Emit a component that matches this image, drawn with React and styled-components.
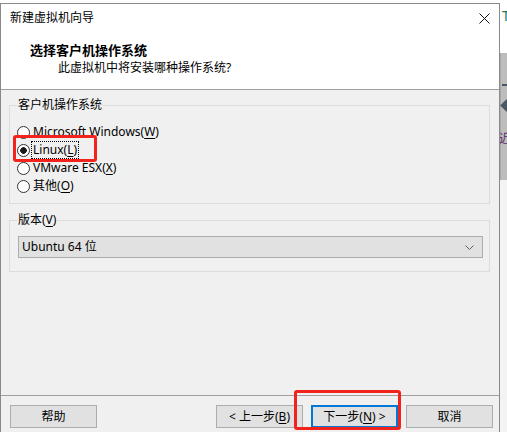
import React from 'react'
import styled, { createGlobalStyle } from 'styled-components'

const GlobalStyle = createGlobalStyle`
  html, body {
    margin: 0;
    padding: 0;
    background: #fff;
  }
  body {
    width: 507px;
    height: 432px;
    overflow: hidden;
    font-family: "Noto Sans", "Noto Sans CJK SC", sans-serif;
    font-size: 12px;
    color: #000;
  }
`

const Screen = styled.div`
  display: flex;
  width: 507px;
  height: 432px;
  overflow: hidden;
`

const Window = styled.div`
  flex: none;
  margin-top: 3px;
  width: 500px;
  height: 440px;
  box-sizing: border-box;
  border: 1px solid #8a8a8a;
  border-bottom: none;
  background: #f0f0f0;
  display: flex;
  flex-direction: column;
`

const TitleBar = styled.div`
  height: 28px;
  background: #fff;
  display: flex;
  align-items: center;
  justify-content: space-between;
  padding: 0 9px;
  line-height: 16px;
`

const Header = styled.div`
  height: 47px;
  background: #fff;
  padding: 10px 0 0 29px;
  border-bottom: 1px solid #a0a0a0;
`

const HeaderTitle = styled.div`
  font-size: 13px;
  font-weight: bold;
  line-height: 16px;
`

const HeaderSub = styled.div`
  margin: 2px 0 0 28px;
  line-height: 16px;
`

const Body = styled.div`
  height: 305px;
  box-sizing: border-box;
  padding: 7px 9px 0 8px;
  display: flex;
  flex-direction: column;
  gap: 8px;
`

const Group = styled.fieldset`
  margin: 0;
  min-width: 0;
  border: 1px solid #dcdcdc;
  padding: ${({ $pad }) => $pad};
`

const Legend = styled.legend`
  padding: 0 1px;
  margin-left: ${({ $shift }) => $shift || 0}px;
  line-height: 16px;
`

const RadioRow = styled.div`
  position: relative;
  display: flex;
  align-items: center;
  gap: 3px;
  height: 18px;
`

const RadioDot = styled.span`
  flex: none;
  width: 13px;
  height: 13px;
  box-sizing: border-box;
  border: 1px solid #333;
  border-radius: 50%;
  background: ${({ $on }) => ($on ? 'radial-gradient(circle, #1a1a1a 0 3px, #fff 3.6px)' : '#fff')};
`

const RadioLabel = styled.span`
  line-height: 16px;
  padding: 0 1px;
  margin-left: -1px;
  outline: ${({ $focus }) => ($focus ? '1px dotted #000' : 'none')};
  outline-offset: 0;
`

const Key = styled.span`
  text-decoration: underline;
  text-underline-offset: 2px;
`

const Mark = styled.span`
  position: absolute;
  box-sizing: border-box;
  border: 3px solid #f2231d;
  border-radius: 3px;
  pointer-events: none;
`

const LinuxMark = styled(Mark)`
  left: -4px;
  top: -6px;
  width: 84px;
  height: 27px;
`

const Select = styled.div`
  height: 22px;
  box-sizing: border-box;
  border: 1px solid #adadad;
  background: #e1e1e1;
  display: flex;
  align-items: center;
  justify-content: space-between;
  padding: 0 8px 0 3px;
  line-height: 16px;
`

const Footer = styled.div`
  border-top: 1px solid #a0a0a0;
  padding: 9px 6px 0 9px;
  display: flex;
  gap: 8px;
`

const Spacer = styled.div`
  flex: 1;
`

const Button = styled.div`
  position: relative;
  width: 87px;
  height: 23px;
  box-sizing: border-box;
  border: ${({ $primary }) => ($primary ? '2px solid #0078d7' : '1px solid #adadad')};
  background: #e1e1e1;
  display: flex;
  align-items: center;
  justify-content: center;
  line-height: 16px;
`

const NextMark = styled(Mark)`
  left: -19px;
  top: -17px;
  right: -5px;
  bottom: -4px;
`

const Strip = styled.div`
  flex: none;
  width: 7px;
  display: flex;
  flex-direction: column;
  overflow: hidden;
`

const StripTop = styled.div`
  height: 53px;
  background: #fff;
  color: #1f7a55;
  font-size: 14px;
  line-height: 14px;
  padding: 9px 0 0 2px;
  box-sizing: border-box;
`

const StripMid = styled.div`
  height: 127px;
  background: #bdbdbd;
  border-left: 1px solid #a8a8a8;
  display: flex;
  flex-direction: column;
  padding-top: 31px;
  box-sizing: border-box;
`

const StripDash = styled.div`
  width: 6px;
  height: 2px;
  background: #4a5866;
  margin-left: 1px;
`

const StripDiamond = styled.div`
  width: 9px;
  height: 9px;
  background: #4a5866;
  transform: rotate(45deg);
  margin: 15px 0 0 1px;
`

const StripChar = styled.div`
  margin: 22px 0 0 -2px;
  font-size: 12px;
  line-height: 14px;
  color: #5a2a6a;
  white-space: nowrap;
`

const StripBottom = styled.div`
  flex: 1;
  background: #f3f3f3;
`

const CloseIcon = () => (
  <svg width="11" height="11" viewBox="0 0 11 11" style={{ marginRight: 0 }}>
    <path d="M0.5 0.5 L10.5 10.5 M10.5 0.5 L0.5 10.5" stroke="#111" strokeWidth="1" fill="none" />
  </svg>
)

const Chevron = () => (
  <svg width="9" height="5" viewBox="0 0 9 5">
    <path d="M0.5 0.5 L4.5 4.5 L8.5 0.5" stroke="#606060" strokeWidth="1" fill="none" />
  </svg>
)

const osOptions = [
  { label: 'Microsoft Windows', key: 'W' },
  { label: 'Linux', key: 'L', checked: true },
  { label: 'VMware ESX', key: 'X' },
  { label: '其他', key: 'O' },
]

export default function App() {
  return (
    <>
      <GlobalStyle />
      <Screen>
        <Window>
          <TitleBar>
            <span>新建虚拟机向导</span>
            <CloseIcon />
          </TitleBar>
          <Header>
            <HeaderTitle>选择客户机操作系统</HeaderTitle>
            <HeaderSub>此虚拟机中将安装哪种操作系统?</HeaderSub>
          </Header>
          <Body>
            <Group $pad="10px 6px 8px 7px">
              <Legend>客户机操作系统</Legend>
              {osOptions.map((opt) => (
                <RadioRow key={opt.key}>
                  <RadioDot $on={opt.checked} />
                  <RadioLabel $focus={opt.checked}>
                    {opt.label}(<Key>{opt.key}</Key>)
                  </RadioLabel>
                  {opt.checked && <LinuxMark />}
                </RadioRow>
              ))}
            </Group>
            <Group $pad="8px 6px 13px 8px">
              <Legend $shift={-1}>
                版本(<Key>V</Key>)
              </Legend>
              <Select>
                <span>Ubuntu 64 位</span>
                <Chevron />
              </Select>
            </Group>
          </Body>
          <Footer>
            <Button>帮助</Button>
            <Spacer />
            <Button>&lt; 上一步(<Key>B</Key>)</Button>
            <Button $primary>
              下一步(<Key>N</Key>) &gt;
              <NextMark />
            </Button>
            <Button>取消</Button>
          </Footer>
        </Window>
        <Strip>
          <StripTop>T</StripTop>
          <StripMid>
            <StripDash />
            <StripDiamond />
            <StripChar>近</StripChar>
          </StripMid>
          <StripBottom />
        </Strip>
      </Screen>
    </>
  )
}
